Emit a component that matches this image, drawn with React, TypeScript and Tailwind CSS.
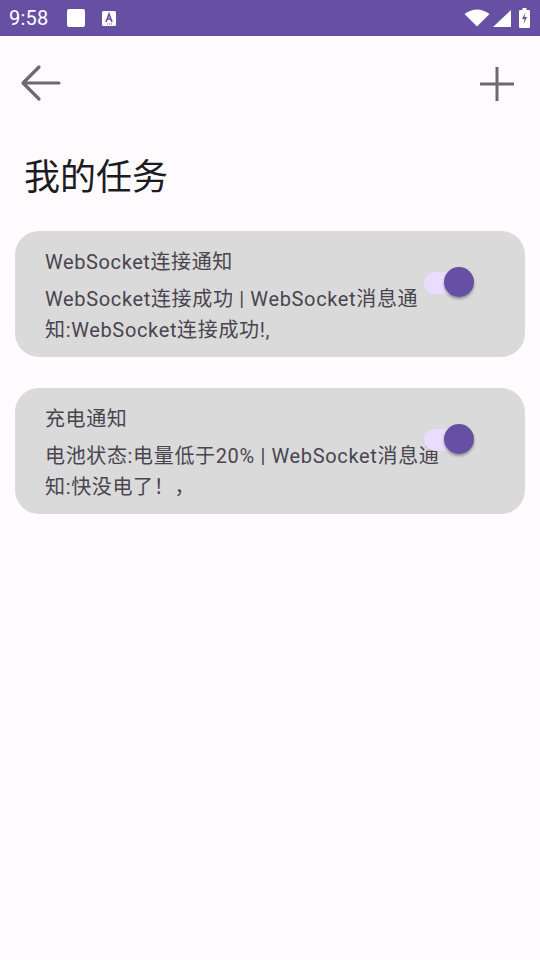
import React from "react";

const font = { fontFamily: 'Roboto, "Noto Sans CJK SC", sans-serif' };

function StatusBar() {
  return (
    <div className="h-[36px] bg-[#6750a4] flex items-center pl-[9px] pr-[10px] text-white">
      <span className="text-[20px] leading-none tracking-[0.2px]" style={font}>9:58</span>
      <div className="ml-[19px] w-[18px] h-[18px] bg-white rounded-[2px]" />
      <svg className="ml-[17px]" width="14" height="15" viewBox="0 0 14 15">
        <rect x="0" y="0" width="14" height="15" rx="1.5" fill="white" />
        <path d="M4 11 L7 3 L10 11 M5.2 8 H8.8" stroke="#6750a4" strokeWidth="1.6" fill="none" />
        <rect x="5" y="12.5" width="1" height="1" fill="#6750a4" />
        <rect x="7" y="12.5" width="1" height="1" fill="#6750a4" />
        <rect x="9" y="12.5" width="1" height="1" fill="#6750a4" />
      </svg>
      <div className="flex-1" />
      <svg width="26" height="18" viewBox="0 0 26 18">
        <path d="M0.5 5 Q13 -4 25.5 5 L13 17.5 Z" fill="white" />
      </svg>
      <svg className="ml-[2px]" width="19" height="17" viewBox="0 0 19 17">
        <path d="M19 0 L19 17 L1 17 Z" fill="white" />
      </svg>
      <svg className="ml-[8px]" width="11" height="20" viewBox="0 0 11 20">
        <rect x="3.5" y="0" width="4" height="2" fill="white" />
        <rect x="0" y="2" width="11" height="18" rx="1" fill="white" />
        <path d="M6.5 4.5 L3 11 H5.5 L4.5 16 L8 9 H5.5 Z" fill="#6750a4" />
      </svg>
    </div>
  );
}

function Toggle() {
  return (
    <div className="absolute right-[51px] top-[36px] w-[50px] h-[30px]">
      <div className="absolute left-0 top-[5px] w-[46px] h-[22px] rounded-full bg-[#e9ddff]" />
      <div className="absolute right-0 top-0 w-[30px] h-[30px] rounded-full bg-[#6750a4] shadow-[0_2px_3px_rgba(0,0,0,0.35)]" />
    </div>
  );
}

function Card({ title, body }: { title: string; body: string }) {
  return (
    <div className="relative mx-[15px] h-[126px] rounded-[24px] bg-[#dadada] pl-[30px] pt-[17px]" style={font}>
      <div className="text-[20px] leading-[28px] tracking-[0.6px] text-[#49454f]">{title}</div>
      <div className="mt-[8px] w-[412px] text-[20px] leading-[31px] tracking-[0.65px] text-[#49454f]">{body}</div>
      <Toggle />
    </div>
  );
}

export default function App() {
  return (
    <div className="w-[540px] h-[960px] bg-[#fffbfe] overflow-hidden" style={font}>
      <StatusBar />
      <div className="h-[96px] flex items-center justify-between pl-[20px] pr-[24px]">
        <svg width="42" height="40" viewBox="0 0 42 40">
          <path d="M39 19 H4 M19 3 L3 19 L19 35" stroke="#6b6b6b" strokeWidth="3.2" fill="none" strokeLinecap="round" strokeLinejoin="round" />
        </svg>
        <svg width="38" height="38" viewBox="0 0 38 38">
          <path d="M19 2 V36 M2 19 H36" stroke="#6b6b6b" strokeWidth="3" fill="none" strokeLinecap="butt" />
        </svg>
      </div>
      <div className="mt-[26px] pl-[24px] text-[36px] leading-[40px] text-[#1c1b1f]">我的任务</div>
      <div className="mt-[33px] flex flex-col gap-[31px]">
        <Card title="WebSocket连接通知" body="WebSocket连接成功 | WebSocket消息通知:WebSocket连接成功!," />
        <Card title="充电通知" body="电池状态:电量低于20% | WebSocket消息通知:快没电了！，" />
      </div>
    </div>
  );
}
